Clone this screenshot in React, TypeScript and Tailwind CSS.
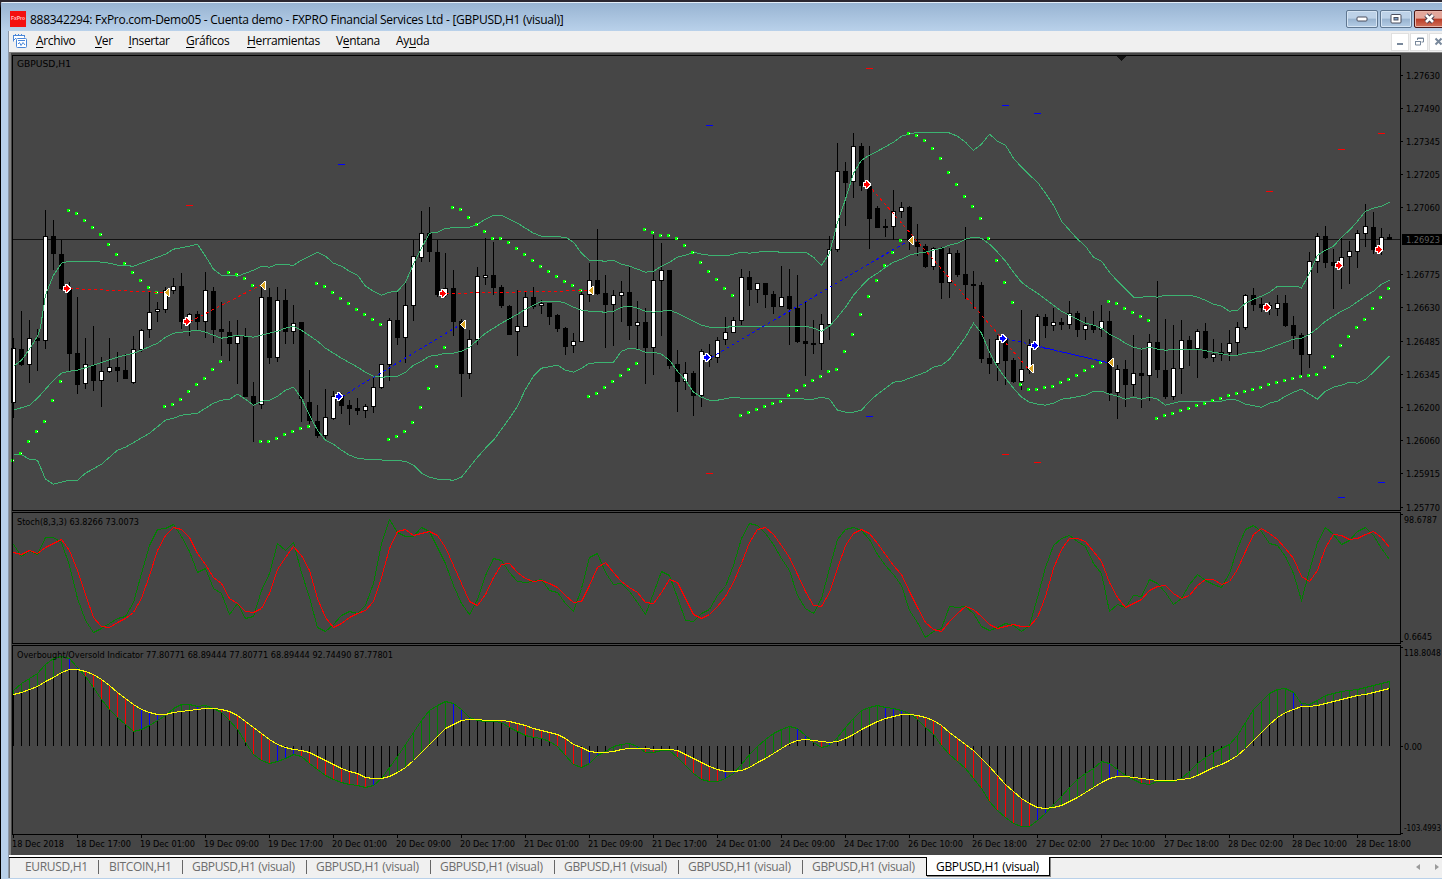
import type { ReactNode } from "react";

const STEP = 8;
const X0 = 13;
const barX = (i: number) => X0 + i * STEP;

// wick top, body top, body bottom, wick bottom, 1 = bullish
const candles = `338 348 403 418 1|311 349 365 366 0|320 338 365 383 1|329 338 341 371 0|210 236 341 349 1|220 236 254 270 0|240 254 289 290 0|282 289 354 372 0
297 353 385 394 0|338 364 384 389 1|326 365 381 391 0|357 371 381 407 1|338 367 372 373 1|352 367 371 382 0|354 370 379 379 0|336 349 383 384 1
329 330 350 352 1|292 312 330 338 1|302 309 312 322 1|287 290 310 313 1|278 286 291 294 1|273 286 322 329 0|313 314 322 336 1|311 314 322 331 0
272 290 322 338 1|287 291 330 343 0|302 329 332 356 0|321 332 344 361 0|320 336 344 384 1|328 336 397 397 0|382 396 404 442 0|286 297 405 409 1
288 297 358 364 0|287 300 358 362 1|289 300 332 344 0|305 323 332 344 1|322 322 399 422 0|370 402 421 424 0|405 421 436 438 0|389 417 436 439 1
391 396 419 420 1|393 396 406 414 0|400 405 409 425 0|398 408 411 415 0|404 406 411 418 1|376 387 407 413 1|364 364 388 389 1|318 320 365 381 1
292 320 338 345 0|283 305 338 363 1|240 256 306 321 1|211 233 258 262 1|207 233 252 262 0|240 252 295 297 0|253 288 295 297 1|270 288 322 336 0
319 321 374 397 0|330 339 374 379 1|267 276 340 345 1|238 275 278 285 1|242 275 288 295 0|285 287 306 308 0|305 306 335 335 0|290 326 332 356 1
292 297 327 327 1|287 297 307 309 0|300 303 306 314 1|303 303 317 325 0|314 315 329 332 0|327 328 347 355 0|333 341 346 353 1|292 294 342 342 1
263 280 295 302 1|229 280 294 295 0|275 293 305 348 0|290 295 305 346 1|281 292 296 322 1|266 292 326 340 0|301 322 326 349 1|308 322 348 384 0
235 280 348 375 1|243 270 281 336 1|270 270 366 369 0|350 364 382 412 0|362 373 382 390 1|371 373 396 416 0|349 351 396 407 1|344 355 360 367 0
337 340 358 363 1|317 332 340 345 1|317 320 333 333 1|269 277 321 325 1|271 277 290 306 0|283 283 290 303 1|283 283 295 308 0|291 294 307 314 0
266 297 307 307 1|269 296 309 345 0|275 308 342 343 0|301 341 344 376 0|320 343 345 354 0|314 324 344 370 1|236 249 325 340 1|143 171 250 252 1
162 171 183 226 0|133 146 182 198 1|143 146 186 191 0|146 186 219 249 0|206 208 228 228 0|219 226 228 237 0|190 211 227 240 1|202 207 212 218 1
206 207 241 250 0|224 242 247 256 0|244 246 267 268 0|247 248 267 270 1|247 248 283 299 0|248 253 283 298 1|250 253 275 277 0|227 274 285 299 0
271 284 286 309 0|282 285 359 363 0|339 358 364 374 0|335 339 364 381 1|338 339 361 385 0|358 360 382 383 0|310 369 382 390 1|339 345 370 374 1
314 316 346 349 1|314 317 326 338 0|308 322 326 331 1|318 322 325 330 0|301 313 325 329 1|311 313 330 337 0|317 325 330 340 1|311 325 330 333 0
305 321 330 337 1|311 321 393 401 0|365 369 393 419 1|360 369 385 407 0|335 373 385 396 1|348 373 376 408 0|334 342 376 401 1|281 342 370 378 0
319 370 397 399 0|325 368 397 400 1|320 340 369 394 1|336 340 350 366 0|329 331 349 378 1|323 331 358 359 0|339 354 358 362 1|343 352 355 361 0
330 343 353 361 1|322 327 343 355 1|294 295 328 330 1|288 295 305 311 0|298 304 308 312 0|302 305 309 315 0|295 303 309 316 1|295 303 326 327 0
316 325 336 349 0|333 335 355 375 0|252 261 355 368 1|233 236 262 273 1|226 236 263 268 0|249 262 266 309 0|238 257 266 289 1|241 251 257 284 1
230 233 252 268 1|204 226 234 247 1|212 227 250 254 0|228 237 250 255 1|234 237 240 240 0`
  .split(/[|\n]/)
  .map((row) => row.split(" ").map(Number));

const upperBand =
  "13,366 21,360 29,349 37,336 40,327 45,295 53,275 61,263 69,261 93,261 101,262 109,263 117,265 133,266 141,263 149,260 165,254 173,249 189,246 197,244 205,256 213,269 221,275 229,275 237,276 245,273 253,270 261,266 269,267 277,264 293,265 301,260 309,256 317,252 325,256 333,263 341,266 349,271 357,275 365,286 373,291 381,295 389,292 397,291 405,282 413,264 421,248 429,233 437,232 445,228 469,227 477,224 485,219 493,215 501,215 509,219 517,223 525,228 533,233 541,236 565,237 573,242 581,253 589,260 605,261 613,260 621,264 629,266 637,269 645,272 653,271 661,266 669,262 677,257 685,255 693,252 701,254 709,255 729,255 741,252 749,253 765,251 781,252 805,252 813,257 821,265 829,253 837,222 845,199 853,173 861,160 869,155 877,151 893,142 901,136 909,134 917,132 947,132 957,136 965,142 973,150 981,144 989,134 997,141 1005,145 1013,158 1021,167 1029,175 1037,182 1045,193 1053,205 1061,221 1069,230 1077,239 1085,246 1093,257 1101,261 1109,272 1117,281 1125,289 1133,297 1141,297 1149,296 1157,297 1165,295 1189,295 1197,297 1205,300 1213,304 1221,306 1229,311 1237,310 1245,303 1253,299 1261,296 1269,292 1277,286 1297,286 1301,288 1309,273 1317,255 1325,250 1333,246 1341,237 1349,230 1357,221 1365,211 1373,208 1381,206 1389,202";
const middleBand =
  "13,410 29,405 37,398 45,389 53,380 61,373 69,371 77,370 93,365 117,357 133,353 141,350 157,343 165,337 173,333 181,332 197,330 205,332 213,335 221,338 237,335 253,337 261,335 269,333 277,331 285,328 293,326 301,330 317,341 325,348 341,358 350,363 357,367 365,372 373,376 381,377 397,376 405,372 413,365 421,361 429,356 437,355 445,353 453,353 461,351 469,347 477,340 485,333 501,323 517,314 525,309 533,305 541,301 557,301 565,303 573,307 581,310 589,311 605,312 613,311 621,307 629,306 637,308 645,311 653,312 661,311 669,310 677,313 685,317 693,321 701,325 709,327 725,327 741,326 805,326 813,328 821,331 829,326 837,317 845,307 853,295 861,286 869,278 877,273 885,267 893,262 901,259 909,255 917,253 925,252 933,250 941,248 949,245 957,243 965,239 973,237 981,238 989,244 997,252 1005,261 1013,272 1021,282 1029,288 1037,293 1053,305 1061,311 1069,315 1077,319 1085,323 1093,325 1101,328 1109,334 1117,338 1125,343 1133,347 1141,349 1149,347 1157,349 1165,350 1181,349 1197,349 1213,352 1229,355 1237,355 1245,353 1261,351 1269,348 1277,345 1285,342 1293,339 1301,338 1309,334 1317,328 1325,321 1333,316 1341,311 1349,307 1365,296 1373,291 1381,284 1389,280";
const lowerBand =
  "13,454 20,454 29,459 37,460 45,479 53,484 69,480 77,480 85,473 101,464 117,450 125,447 149,433 165,420 173,418 181,415 197,413 205,408 213,403 221,400 229,399 237,394 245,399 253,405 261,401 269,400 277,396 285,390 293,387 301,398 309,415 317,430 325,440 333,444 341,450 349,455 357,458 365,459 385,460 405,461 413,465 421,473 429,477 437,479 453,480 461,477 469,467 477,457 485,448 493,440 501,429 509,418 517,406 525,389 533,376 541,368 557,365 565,370 573,372 581,368 589,363 613,362 621,351 629,348 637,349 645,352 653,352 661,354 669,360 677,371 685,380 693,392 701,397 709,400 717,400 733,397 741,398 797,398 805,399 813,399 821,397 829,399 837,410 845,412 853,412 861,410 869,401 877,394 885,388 893,382 901,381 909,378 917,375 925,372 933,367 941,365 949,359 957,348 965,337 973,323 981,333 989,352 997,367 1005,378 1013,388 1021,397 1029,402 1037,404 1045,405 1053,403 1061,399 1069,398 1085,395 1093,391 1101,391 1109,394 1117,396 1125,399 1133,397 1141,399 1149,397 1157,399 1165,405 1181,401 1221,401 1229,399 1237,400 1245,404 1261,407 1269,403 1277,401 1285,396 1293,392 1301,389 1309,394 1317,399 1325,391 1333,387 1341,385 1349,382 1357,383 1365,379 1373,372 1381,364 1389,356";

// parabolic SAR runs: first bar index, then one y per bar
const sar: [number, number[]][] = [
  [0, [460, 453, 441, 431, 421, 400, 381]],
  [7, [210, 213, 220, 227, 234, 244, 254, 263, 272, 280, 287, 292]],
  [19, [406, 404, 399, 391, 384, 378, 369, 361]],
  [27, [272, 274, 278, 285]],
  [31, [441, 441, 438, 434, 431, 428, 426]],
  [38, [283, 286, 292, 298, 303, 309, 314, 319, 324]],
  [47, [439, 436, 431, 422, 407, 388, 366, 347]],
  [55, [207, 209, 217, 224, 231, 238, 238, 242, 248, 254, 260, 266, 271, 276, 281, 285, 290]],
  [72, [396, 393, 387, 381, 375, 369, 363]],
  [79, [229, 232, 235, 235, 238, 245, 252, 262, 271, 279, 288, 295]],
  [91, [415, 412, 409, 406, 403, 401, 395, 390, 385, 380, 376, 371, 369, 351, 334, 314, 296, 280, 265, 252, 240]],
  [112, [133, 135, 140, 148, 158, 172, 184, 196, 206, 218, 238, 260, 282, 302]],
  [126, [384, 389, 389, 387, 386, 382, 379, 375, 370, 366, 362]],
  [137, [301, 303, 308, 312, 316, 320]],
  [143, [418, 415, 413, 410, 408, 405, 403, 400, 398, 395, 393, 391, 389, 387, 384, 382, 380, 378, 376, 375, 374, 367, 356, 345, 336, 327, 319, 308, 297, 288]],
];

const stochMain = [
  544, 556, 550, 554, 537, 537, 542, 565, 598, 620, 632, 628, 623, 618, 616, 602, 573, 545, 529, 528, 524, 536, 551, 572, 568, 588, 593, 614, 603,
  618, 616, 590, 573, 543, 550, 542, 572, 597, 627, 631, 624, 615, 611, 613, 605, 583, 543, 519, 532, 536, 536, 527, 531, 547, 563, 585, 603, 614,
  599, 575, 558, 560, 572, 581, 582, 581, 579, 590, 592, 603, 611, 588, 557, 553, 572, 584, 583, 591, 602, 614, 593, 571, 575, 597, 620, 621, 613,
  609, 595, 586, 565, 538, 523, 525, 533, 544, 558, 570, 595, 608, 613, 598, 568, 539, 529, 527, 530, 539, 554, 565, 574, 585, 610, 622, 637, 631,
  628, 606, 607, 606, 613, 626, 630, 627, 623, 625, 631, 625, 597, 567, 545, 538, 535, 541, 546, 563, 573, 611, 604, 607, 595, 596, 579, 583, 592,
  604, 598, 584, 574, 580, 584, 587, 573, 548, 529, 525, 531, 543, 545, 556, 573, 600, 570, 542, 527, 534, 544, 540, 531, 527, 535, 548, 559,
];
const stochSignal = [
  552, 554, 550, 553, 547, 543, 539, 550, 570, 594, 617, 626, 627, 622, 618, 612, 598, 575, 550, 535, 527, 529, 537, 553, 564, 577, 583, 598, 603,
  611, 612, 608, 593, 569, 557, 546, 555, 570, 598, 617, 627, 623, 617, 613, 610, 601, 577, 548, 531, 529, 535, 533, 531, 535, 547, 565, 583, 601,
  605, 594, 577, 564, 563, 572, 578, 581, 580, 583, 587, 595, 602, 601, 585, 567, 562, 572, 581, 587, 592, 602, 603, 592, 579, 582, 598, 614, 618,
  614, 606, 596, 582, 563, 542, 529, 527, 534, 545, 557, 574, 591, 605, 606, 592, 568, 545, 533, 529, 533, 543, 554, 565, 574, 591, 607, 622, 629,
  631, 621, 613, 606, 609, 616, 624, 628, 626, 624, 626, 626, 617, 596, 568, 549, 538, 538, 541, 551, 561, 582, 597, 607, 603, 599, 590, 586, 585,
  593, 598, 595, 585, 579, 579, 584, 581, 569, 551, 534, 528, 533, 539, 548, 558, 576, 581, 570, 547, 534, 535, 539, 538, 534, 531, 537, 547,
];

const obosFast = [
  690, 683, 678, 673, 664, 658, 656, 658, 667, 676, 687, 699, 709, 717, 724, 731, 729, 725, 720, 715, 708, 704, 704, 706, 705, 708, 712, 720, 729,
  742, 754, 760, 763, 761, 758, 754, 756, 763, 769, 775, 779, 782, 784, 785, 787, 785, 778, 767, 756, 744, 732, 720, 710, 705, 701, 703, 709, 717,
  720, 721, 721, 722, 727, 731, 735, 737, 738, 741, 746, 755, 764, 767, 763, 755, 751, 746, 744, 743, 746, 752, 752, 750, 750, 757, 765, 773, 779,
  781, 781, 778, 773, 764, 754, 746, 739, 733, 729, 726, 728, 735, 742, 747, 745, 737, 727, 718, 710, 707, 705, 707, 708, 710, 713, 719, 727, 734,
  745, 754, 761, 768, 778, 788, 801, 810, 817, 823, 826, 826, 820, 813, 804, 796, 787, 779, 773, 768, 761, 763, 769, 775, 779, 783, 784, 781, 781,
  781, 778, 771, 763, 757, 752, 748, 744, 735, 722, 709, 701, 693, 689, 688, 692, 703, 704, 700, 695, 693, 691, 690, 689, 687, 685, 683, 681,
];
const obosSlow = [
  694, 692, 689, 686, 681, 677, 672, 669, 669, 671, 674, 679, 685, 692, 698, 704, 709, 712, 714, 714, 712, 711, 710, 709, 708, 708, 709, 711, 715,
  721, 727, 733, 739, 744, 747, 749, 750, 752, 756, 760, 764, 768, 771, 773, 777, 778, 778, 776, 772, 767, 760, 752, 744, 736, 728, 724, 720, 719,
  719, 720, 720, 720, 721, 723, 725, 728, 730, 732, 734, 738, 744, 747, 751, 752, 752, 751, 749, 748, 748, 748, 749, 749, 749, 750, 754, 758, 762,
  766, 769, 771, 771, 770, 767, 762, 758, 753, 748, 743, 740, 739, 740, 741, 742, 741, 738, 734, 729, 725, 721, 718, 716, 714, 714, 715, 717, 720,
  725, 732, 738, 744, 750, 758, 766, 775, 784, 791, 798, 803, 807, 808, 807, 805, 801, 797, 792, 787, 782, 778, 776, 776, 777, 778, 779, 780, 780,
  780, 779, 778, 775, 771, 767, 764, 760, 755, 748, 740, 732, 724, 717, 712, 709, 706, 706, 705, 703, 701, 699, 697, 695, 694, 692, 690, 688,
];

const sells = [[66, 288], [186, 321], [442, 293], [866, 184], [1266, 307], [1338, 265], [1378, 249]];
const buys = [[338, 396], [706, 357], [1002, 338], [1034, 345]];
const closes = [[167, 292], [263, 285], [463, 324], [591, 290], [911, 240], [1031, 368], [1111, 362]];
const sellLines = [[70, 288, 164, 292], [190, 321, 260, 285], [446, 293, 587, 290], [868, 184, 1028, 368]];
const buyLines = [[342, 396, 459, 325], [711, 357, 907, 241], [1006, 338, 1107, 362], [1038, 346, 1107, 362]];
const redLevels = [[189, 205], [869, 68], [1381, 133], [1341, 149], [1269, 191], [709, 473], [1005, 454], [1037, 462]];
const blueLevels = [[341, 164], [709, 125], [1005, 105], [1037, 113], [869, 416], [1341, 497], [1381, 482]];

const prices: [string, number][] = [
  ["1.27630", 75], ["1.27490", 108], ["1.27345", 141], ["1.27205", 174], ["1.27060", 207], ["1.26775", 274], ["1.26630", 307],
  ["1.26485", 341], ["1.26345", 374], ["1.26200", 407], ["1.26060", 440], ["1.25915", 473], ["1.25770", 507],
];

const dates = [
  "18 Dec 2018", "18 Dec 17:00", "19 Dec 01:00", "19 Dec 09:00", "19 Dec 17:00", "20 Dec 01:00", "20 Dec 09:00", "20 Dec 17:00", "21 Dec 01:00",
  "21 Dec 09:00", "21 Dec 17:00", "24 Dec 01:00", "24 Dec 09:00", "24 Dec 17:00", "26 Dec 10:00", "26 Dec 18:00", "27 Dec 02:00", "27 Dec 10:00",
  "27 Dec 18:00", "28 Dec 02:00", "28 Dec 10:00", "28 Dec 18:00",
];

const toPoints = (ys: number[]) => ys.map((y, i) => `${barX(i) + 0.5},${y + 0.5}`).join(" ");

function Label({ x, y, w, children, className = "fill-black" }: { x: number; y: number; w: number; children: string; className?: string }) {
  return (
    <text x={x} y={y} textLength={w} lengthAdjust="spacingAndGlyphs" className={className}>
      {children}
    </text>
  );
}

function Candles() {
  return (
    <g>
      {candles.map(([high, top, bottom, low, up], i) => {
        const x = barX(i);
        return (
          <g key={i}>
            <rect x={x} y={high} width={1} height={Math.max(1, low - high)} fill="#000" />
            <rect x={x - 2} y={top} width={5} height={Math.max(1, bottom - top)} fill="#000" />
            {up === 1 && <rect x={x - 1} y={top + 1} width={3} height={Math.max(1, bottom - top - 2)} fill="#fff" />}
          </g>
        );
      })}
    </g>
  );
}

function Histogram() {
  const zero = 746;
  return (
    <g>
      {obosFast.map((fast, i) => {
        const slow = obosSlow[i];
        const prev = i > 0 ? obosFast[i - 1] : fast + 1;
        const above = fast < zero && slow < zero;
        const below = fast > zero && slow > zero;
        const near = above ? Math.max(fast, slow) : below ? Math.min(fast, slow) : zero;
        let color = "#0000ff";
        if (fast < slow && fast <= prev) color = "#008000";
        if (fast > slow && fast >= prev) color = "#ff0000";
        return (
          <g key={i}>
            <rect x={barX(i)} y={Math.min(fast, slow)} width={1} height={Math.abs(fast - slow)} fill={color} />
            <rect x={barX(i)} y={Math.min(near, zero)} width={1} height={Math.abs(near - zero)} fill="#000" />
          </g>
        );
      })}
    </g>
  );
}

function Arrow({ x, y, color }: { x: number; y: number; color: string }) {
  const d = "M-2 -1h2v-2h1v1h1v1h1v1h1v1h-1v1h-1v1h-1v1h-1v-2h-2z";
  return (
    <g transform={`translate(${x} ${y})`}>
      <path d={d} fill="#fff" stroke="#fff" strokeWidth={2} />
      <path d={d} fill={color} />
    </g>
  );
}

function CloseMark({ x, y }: { x: number; y: number }) {
  return (
    <g transform={`translate(${x} ${y})`}>
      <path d="M3 -4v9h-2v-1h-1v-1h-1v-1h-1v-1h-1v-1h1v-1h1v-1h1v-1h1v-1z" fill="#fff" />
      <path d="M2 -3v7h-1v-1h-1v-1h-1v-1h-1v-1h1v-1h1v-1h1v-1z" fill="#daa520" />
    </g>
  );
}

function Chart() {
  return (
    <svg width="1433" height="803" viewBox="9 52 1433 803" className="block shrink-0 text-[9.5px]" fontFamily="'DejaVu Sans Condensed', 'DejaVu Sans', sans-serif" shapeRendering="crispEdges">
      <rect x="9" y="52" width="1433" height="803" fill="#464646" />
      <rect x="9" y="52" width="2" height="803" fill="#808080" />
      <rect x="9" y="52" width="1433" height="1" fill="#808080" />

      {/* price panel */}
      <rect x="12" y="239" width="1388" height="1" fill="#111" />
      <Candles />
      <g fill="none" stroke="#3cb371">
        <polyline points={upperBand} transform="translate(.5 .2)" />
        <polyline points={middleBand} transform="translate(.5 .2)" />
        <polyline points={lowerBand} transform="translate(.5 .2)" />
      </g>
      {sar.map(([start, ys]) =>
        ys.map((y, k) => (
          <g key={`${start}-${k}`}>
            <rect x={barX(start + k) - 2} y={y - 1} width={3} height={3} fill="#00ff00" />
            <rect x={barX(start + k)} y={y} width={1} height={1} fill="#fff" />
          </g>
        ))
      )}
      {redLevels.map(([x, y]) => (
        <rect key={`${x}-${y}`} x={x - 3} y={y} width={7} height={1} fill="#ff0000" />
      ))}
      {blueLevels.map(([x, y]) => (
        <rect key={`${x}-${y}`} x={x - 3} y={y} width={7} height={1} fill="#0000ff" />
      ))}
      {sellLines.map(([x1, y1, x2, y2]) => (
        <line key={x1} x1={x1} y1={y1 + 0.5} x2={x2} y2={y2 + 0.5} stroke="#ff0000" strokeDasharray="3 3" />
      ))}
      {buyLines.map(([x1, y1, x2, y2]) => (
        <line key={x1} x1={x1} y1={y1 + 0.5} x2={x2} y2={y2 + 0.5} stroke="#0000ff" strokeDasharray="3 3" />
      ))}
      {closes.map(([x, y]) => <CloseMark key={x} x={x} y={y} />)}
      {sells.map(([x, y]) => <Arrow key={x} x={x} y={y} color="#ff0000" />)}
      {buys.map(([x, y]) => <Arrow key={x} x={x} y={y} color="#0000ff" />)}
      <path d="M1116 56h11l-5.5 5z" fill="#111" />

      {/* stochastic */}
      <g fill="none">
        <polyline points={toPoints(stochMain)} stroke="#008000" />
        <polyline points={toPoints(stochSignal)} stroke="#ff0000" />
      </g>

      {/* overbought / oversold */}
      <Histogram />
      <g fill="none">
        <polyline points={toPoints(obosFast)} stroke="#008000" />
        <polyline points={toPoints(obosSlow)} stroke="#ffff00" />
      </g>

      {/* frames */}
      <g fill="none" stroke="#000">
        <rect x="12.5" y="55.5" width="1388" height="455" />
        <rect x="12.5" y="512.5" width="1388" height="131" />
        <rect x="12.5" y="645.5" width="1388" height="189" />
      </g>

      {/* scales */}
      {prices.map(([p, y]) => (
        <g key={p}>
          <rect x="1401" y={y} width="2" height="1" />
          <Label x={1406} y={y + 4} w={34}>{p}</Label>
        </g>
      ))}
      {[514, 641, 647, 746, 833].map((y) => (
        <rect key={y} x="1401" y={y} width="2" height="1" />
      ))}
      <rect x="1402" y="234" width="40" height="11" />
      <Label x={1406} y={243} w={34} className="fill-[#5e5e5e]">1.26923</Label>
      <Label x={1404} y={523} w={33}>98.6787</Label>
      <Label x={1404} y={640} w={28}>0.6645</Label>
      <Label x={1404} y={656} w={37}>118.8048</Label>
      <Label x={1404} y={750} w={18}>0.00</Label>
      <Label x={1404} y={831} w={37}>-103.4993</Label>

      <Label x={17} y={67} w={54}>GBPUSD,H1</Label>
      <Label x={17} y={525} w={122}>Stoch(8,3,3) 63.8266 73.0073</Label>
      <Label x={17} y={658} w={376}>Overbought/Oversold Indicator 77.80771 68.89444 77.80771 68.89444 92.74490 87.77801</Label>
      {dates.map((d, i) => (
        <g key={d}>
          <rect x={13 + i * 64} y="835" width="1" height="3" />
          <Label x={12 + i * 64} y={847} w={i === 0 ? 52 : 55}>{d}</Label>
        </g>
      ))}
    </svg>
  );
}

function CaptionButton({ close, children }: { close?: boolean; children: ReactNode }) {
  return (
    <button
      className={`flex h-[18px] w-8 shrink-0 items-center justify-center rounded-[2px] border ${
        close
          ? "border-[#4a1616] bg-linear-to-b from-[#e3a69b] from-45% via-[#b93a25] via-50% to-[#d0705a] inset-ring inset-ring-[#e8b5aa]"
          : "border-[#5f7791] bg-linear-to-b from-[#bdd2e8] from-45% via-[#98b3cf] via-50% to-[#b4cde6] inset-ring inset-ring-[#d5e4f3]"
      }`}
    >
      {children}
    </button>
  );
}

function TitleBar() {
  return (
    <div className="flex h-7 items-start bg-linear-to-b from-[#98b4d2] to-[#b9d1ea] pl-[9px] text-black">
      <div className="mt-2 flex size-4 shrink-0 items-center justify-center bg-[#f41010] font-['Liberation_Sans'] text-[5px] font-bold text-[#ffc0c0]">
        FxPro
      </div>
      <div className="mt-[9px] ml-1 h-[19px] w-0 flex-1 text-[12px] leading-4 whitespace-nowrap">
        <span className="inline-block tracking-[-0.275px]">
          888342294: FxPro.com-Demo05 - Cuenta demo - FXPRO Financial Services Ltd - [GBPUSD,H1 (visual)]
        </span>
      </div>
      <div className="mt-[7px] -mr-[4px] flex gap-[2px]">
        <CaptionButton>
          <svg width="12" height="6"><rect x="1" y="1" width="10" height="4" rx="1" fill="#fff" stroke="#4b4f5e" /></svg>
        </CaptionButton>
        <CaptionButton>
          <svg width="12" height="10">
            <rect x="1" y=".5" width="10" height="8.5" rx="1" fill="#fff" stroke="#4b4f5e" />
            <rect x="4" y="3.5" width="4" height="2.5" fill="#7da0c8" stroke="#4b4f5e" />
          </svg>
        </CaptionButton>
        <CaptionButton close>
          <svg width="13" height="11" fill="none" className="-translate-x-px -translate-y-px">
            <path d="M3 2l7 7M10 2l-7 7" stroke="#4b4050" strokeWidth="4.6" />
            <path d="M3 2l7 7M10 2l-7 7" stroke="#fff" strokeWidth="2.6" />
          </svg>
        </CaptionButton>
      </div>
    </div>
  );
}

const menu = [
  { before: "", key: "A", after: "rchivo", width: "w-[59px]" },
  { before: "", key: "V", after: "er", width: "w-[33.5px]" },
  { before: "", key: "I", after: "nsertar", width: "w-[57.5px]" },
  { before: "", key: "G", after: "ráficos", width: "w-[61px]" },
  { before: "", key: "H", after: "erramientas", width: "w-[89px]" },
  { before: "V", key: "e", after: "ntana", width: "w-[60px]" },
  { before: "Ay", key: "u", after: "da", width: "w-[50px]" },
];

function MenuBar() {
  return (
    <div className="flex h-[21px] items-center bg-[#f0f0f0] pl-[3px]">
      <svg width="16" height="16" fill="none" stroke="#4a86d8" className="shrink-0 -translate-y-px">
        <path d="M1.5 8.5v-6h11v2" fill="#fff" />
        <path d="M1 2.5h12M3.5 1v2M6.5 1v2M9.5 1v2M2 7l2-2" />
        <rect x="4.5" y="5.5" width="10" height="9" rx="1" fill="#fff" />
        <path d="M6 7.5h7M6 11l1.500-1.500 1.500 3 2-3 2 2.500" />
      </svg>
      <div className="mb-[2px] ml-2 flex flex-1 text-[12px] leading-4 tracking-[-0.35px] whitespace-nowrap">
        {menu.map((m) => (
          <div key={m.after} className={`shrink-0 ${m.width}`}>
            {m.before}
            <span className="underline underline-offset-2">{m.key}</span>
            {m.after}
          </div>
        ))}
      </div>
      <div className="-mr-[5px] flex gap-px text-[#78889b]">
        <div className="flex h-[18px] w-[18px] items-center justify-center border border-[#e0e0e0] bg-white">
          <svg width="9" height="9"><rect x="1" y="6" width="6" height="2" fill="currentColor" /></svg>
        </div>
        <div className="flex h-[18px] w-[18px] items-center justify-center border border-[#e0e0e0] bg-white">
          <svg width="9" height="9" fill="none" stroke="currentColor">
            <path d="M2.500 3V1h6v4H6.500M2.500 1.500h6" />
            <path d="M.5 4v4h5V4M0 4.500h6" />
          </svg>
        </div>
        <div className="flex h-[18px] w-[18px] items-center justify-center border border-[#e0e0e0] bg-white">
          <svg width="9" height="9" stroke="currentColor" strokeWidth="2"><path d="M1.500 1.500l6 6M7.500 1.500l-6 6" /></svg>
        </div>
      </div>
    </div>
  );
}

function Tabs() {
  return (
    <div className="flex h-[21px] bg-[#f0f0f0] text-[12px] leading-[18px] tracking-[-0.33px] whitespace-nowrap text-[#6d6d6d]">
      <div className="flex flex-1 border-t border-black">
        <div className="w-[89px] shrink-0 border-l border-[#777] pl-[15px]">EURUSD,H1</div>
        <div className="flex h-[18px] w-[84px] shrink-0 items-center">
          <span className="h-[14px] w-px bg-[#666]" />
          <span className="pl-[10px]">BITCOIN,H1</span>
        </div>
        {[0, 1, 2, 3, 4, 5].map((n) => (
          <div key={n} className="flex h-[18px] w-[124px] shrink-0 items-center">
            <span className="h-[14px] w-px bg-[#666]" />
            <span className="pl-[9px]">GBPUSD,H1 (visual)</span>
          </div>
        ))}
        <div className="-mt-px h-[19px] w-[124px] shrink-0 border border-t-0 border-black bg-white pt-px pl-[9px] text-black shadow-[1px_1px_0_#888]">
          GBPUSD,H1 (visual)
        </div>
        <div className="flex h-[18px] flex-1 items-center justify-end gap-[15px] pr-[3px]">
          <svg width="4" height="6" fill="#9a9a9a"><path d="M4 0v6L0 3z" /></svg>
          <svg width="4" height="6" fill="#9a9a9a"><path d="M0 0v6l4-3z" /></svg>
        </div>
      </div>
    </div>
  );
}

export default function App() {
  return (
    <div className="flex h-[879px] w-[1442px] flex-col overflow-hidden bg-[#2b2730] pt-[2px] font-['Open_Sans','Noto_Sans',sans-serif] text-black">
      <div className="flex min-h-0 flex-1 flex-col rounded-tl-md border-l border-black bg-[#b9d1ea]">
        <div className="h-px shrink-0 rounded-tl-md bg-[#e4eef8]" />
        <TitleBar />
        <div className="ml-[7px] flex flex-col border-l border-[#8d99a8] bg-white">
          <MenuBar />
          <Chart />
          <div className="h-[2px] bg-white" />
          <Tabs />
        </div>
      </div>
    </div>
  );
}
